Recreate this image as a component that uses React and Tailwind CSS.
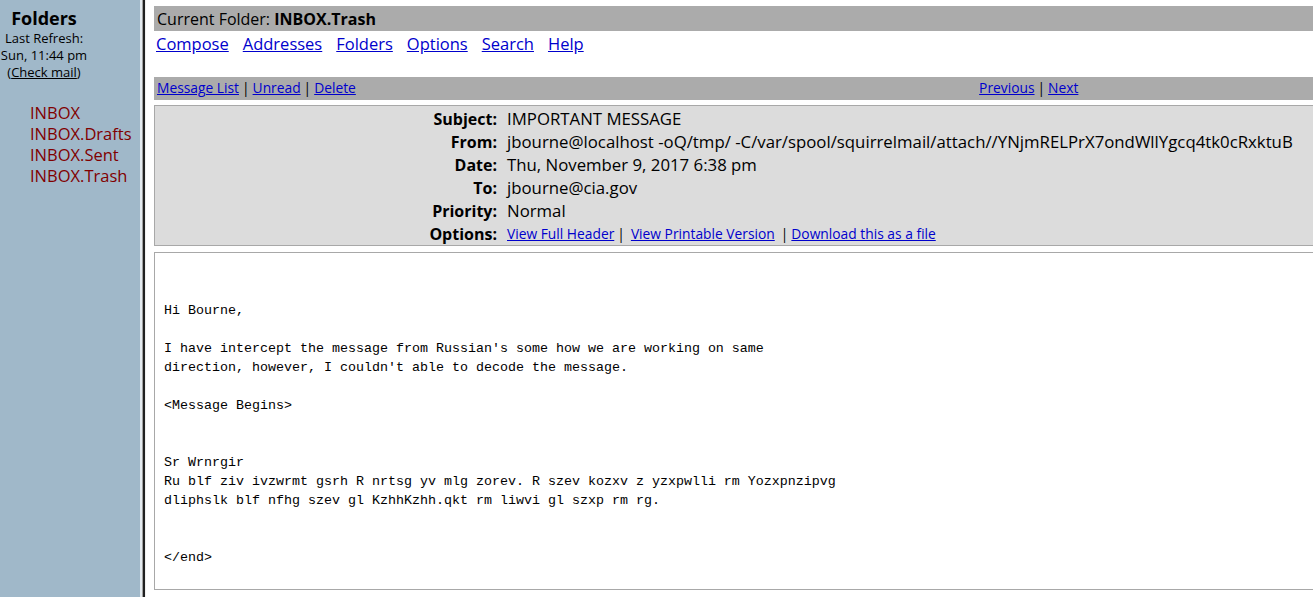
export default function App() {
  const link = "text-[#0000cc] underline";
  const rows = [
    ["Subject:", "IMPORTANT MESSAGE"],
    ["From:", "jbourne@localhost -oQ/tmp/ -C/var/spool/squirrelmail/attach//YNjmRELPrX7ondWllYgcq4tk0cRxktuB"],
    ["Date:", "Thu, November 9, 2017 6:38 pm"],
    ["To:", "jbourne@cia.gov"],
    ["Priority:", "Normal"],
  ];
  const body = `Hi Bourne,

I have intercept the message from Russian's some how we are working on same
direction, however, I couldn't able to decode the message.

<Message Begins>


Sr Wrnrgir
Ru blf ziv ivzwrmt gsrh R nrtsg yv mlg zorev. R szev kozxv z yzxpwlli rm Yozxpnzipvg
dliphslk blf nfhg szev gl KzhhKzhh.qkt rm liwvi gl szxp rm rg.


</end>`;
  const sep = <span className="mx-[3px]">|</span>;
  return (
    <div className="flex w-[1313px] h-[597px] overflow-hidden bg-white text-black font-['Open_Sans',sans-serif]">
      {/* Sidebar */}
      <div className="w-[140px] shrink-0 h-full bg-[#a0b8c9]">
        <div className="w-[88px] flex flex-col items-center pt-[6px]">
          <div className="font-bold text-[18px] leading-[24px]">Folders</div>
          <div className="text-[13px] leading-[17px] whitespace-nowrap">Last Refresh:</div>
          <div className="text-[13px] leading-[17px] whitespace-nowrap">Sun, 11:44 pm</div>
          <div className="text-[13px] leading-[17px] whitespace-nowrap">
            (<span className="underline">Check mail</span>)
          </div>
        </div>
        <div className="mt-[21px] pl-[30px] flex flex-col text-[16.5px] leading-[21px] text-[#800000]">
          <span>INBOX</span>
          <span>INBOX.Drafts</span>
          <span>INBOX.Sent</span>
          <span>INBOX.Trash</span>
        </div>
      </div>
      {/* Frame border */}
      <div className="w-[2px] shrink-0 h-full bg-[#e4ebf0]" />
      <div className="w-[1px] shrink-0 h-full bg-[#a0a0a0]" />
      <div className="w-[2px] shrink-0 h-full bg-[#202020]" />
      <div className="w-[1px] shrink-0 h-full bg-[#f0f0f0]" />
      {/* Main */}
      <div className="flex-1 h-full overflow-hidden pl-[8px] pt-[6px]">
        <div className="w-[1165px]">
          <div className="h-[25px] bg-[#ababab] pl-[3px] flex items-center text-[16px] whitespace-nowrap">
            Current Folder:&nbsp;<b>INBOX.Trash</b>
          </div>
          <div className="h-[26px] flex items-center gap-[14px] pl-[2px] text-[16.5px]">
            <span className={link}>Compose</span>
            <span className={link}>Addresses</span>
            <span className={link}>Folders</span>
            <span className={link}>Options</span>
            <span className={link}>Search</span>
            <span className={link}>Help</span>
          </div>
          <div className="mt-[20px] h-[23px] bg-[#ababab] grid grid-cols-2 items-center text-[13.8px]">
            <div className="pl-[3px] whitespace-nowrap">
              <span className={link}>Message List</span>{sep}<span className={link}>Unread</span>{sep}<span className={link}>Delete</span>
            </div>
            <div className="text-center whitespace-nowrap pl-[2px]">
              <span className={link}>Previous</span>{sep}<span className={link}>Next</span>
            </div>
          </div>
          <div className="mt-[5px] border border-[#a8a8a8] bg-[#dcdcdc]">
            {rows.map(([k, v]) => (
              <div key={k} className="grid grid-cols-[342px_1fr] h-[23px] items-center whitespace-nowrap">
                <div className="text-right font-bold text-[16px]">{k}</div>
                <div className="pl-[10px] text-[16.8px]">{v}</div>
              </div>
            ))}
            <div className="grid grid-cols-[342px_1fr] h-[24px] pt-[1px] items-center whitespace-nowrap">
              <div className="text-right font-bold text-[16px]">Options:</div>
              <div className="pl-[10px] text-[13.8px]">
                <span className={link}>View Full Header</span>
                <span className="ml-[3px]">|</span>
                <span className={link + " ml-[6px]"}>View Printable Version</span>
                <span className="ml-[6px]">|</span>
                <span className={link + " ml-[3px]"}>Download this as a file</span>
              </div>
            </div>
          </div>
          <div className="mt-[6px] h-[338px] border border-[#a8a8a8] bg-white overflow-hidden">
            <pre className="pt-[48px] pl-[9px] m-0 text-[13.33px] leading-[19px] font-['Liberation_Mono',monospace]">{body}</pre>
          </div>
        </div>
      </div>
    </div>
  );
}
